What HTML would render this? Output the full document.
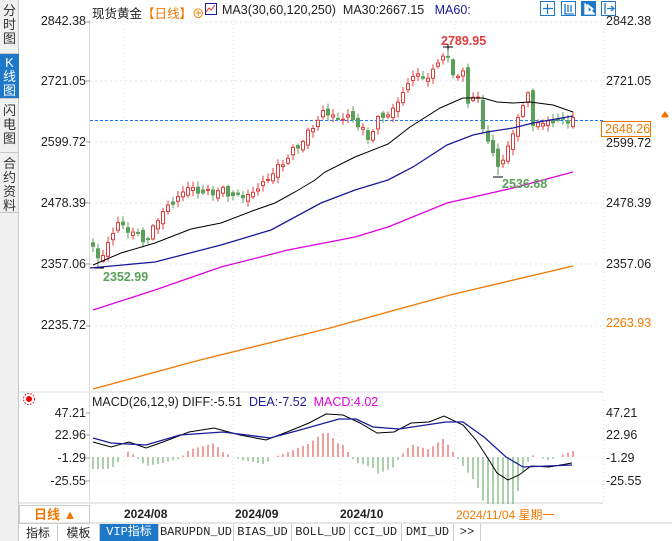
<!DOCTYPE html>
<html><head><meta charset="utf-8">
<style>
*{margin:0;padding:0;box-sizing:border-box}
body{width:672px;height:541px;overflow:hidden;background:#fff;font-family:"Liberation Sans","Noto Sans CJK SC",sans-serif;position:relative}
.side{position:absolute;left:0;top:0;width:19px;height:541px;background:#f0f0f0;border-right:1px solid #c8c8c8}
.tab{position:absolute;left:0;width:19px;font-size:13px;line-height:14px;text-align:center;color:#333;border-bottom:1px solid #c8c8c8}
.lab{position:absolute;font-size:12.5px;color:#222}
.ll{right:586px;text-align:right}
.rl{left:606px}
.btab{position:absolute;top:524px;height:17px;font-size:12px;line-height:17px;text-align:center;color:#222;border-right:1px solid #ccc;font-family:"Liberation Mono","Noto Sans CJK SC",monospace}
</style></head><body>
<div class="side">
<div class="tab" style="top:4px;height:50px">分<br>时<br>图</div>
<div class="tab" style="top:54px;height:45px;background:#1e78c8;color:#fff;padding-top:2px">K<br>线<br>图</div>
<div class="tab" style="top:101px;height:52px;padding-top:3px">闪<br>电<br>图</div>
<div class="tab" style="top:155px;height:58px;padding-top:2px">合<br>约<br>资<br>料</div>
</div>
<svg id="s" width="672" height="541" style="position:absolute;left:0;top:0"></svg>
<div class="lab" style="left:92px;top:3px;font-size:12.5px">现货黄金<span style="color:#f07800">【日线】</span><span style="color:#f07800">⊕</span></div>
<div class="lab" style="left:222px;top:3px">MA3(30,60,120,250)&nbsp; MA30:2667.15 &nbsp; <span style="color:#1a1a9a">MA60:</span></div>
<div class="lab ll" style="top:14px">2842.38</div>
<div class="lab ll" style="top:74px">2721.05</div>
<div class="lab ll" style="top:135px">2599.72</div>
<div class="lab ll" style="top:196px">2478.39</div>
<div class="lab ll" style="top:257px">2357.06</div>
<div class="lab ll" style="top:318px">2235.72</div>
<div class="lab rl" style="top:14px">2842.38</div>
<div class="lab rl" style="top:74px">2721.05</div>
<div class="lab rl" style="top:136px">2599.72</div>
<div class="lab rl" style="top:196px">2478.39</div>
<div class="lab rl" style="top:257px">2357.06</div>
<div class="lab rl" style="top:316px;color:#f07800">2263.93</div>
<div class="lab" style="left:601px;top:121px;width:50px;height:16px;border:1px solid #f07800;color:#f07800;padding-left:3px;line-height:14px;background:#fff">2648.26</div>
<div class="lab" style="left:441px;top:34px;color:#e03c3c;font-weight:bold">2789.95</div>
<div class="lab" style="left:103px;top:270px;color:#5aa05a;font-weight:bold">2352.99</div>
<div class="lab" style="left:502px;top:177px;color:#5aa05a;font-weight:bold">2536.68</div>
<div class="lab" style="left:92px;top:395px">MACD(26,12,9) DIFF:-5.51 &nbsp;<span style="color:#1a1a9a">DEA:-7.52</span> &nbsp;<span style="color:#e000e0">MACD:4.02</span></div>
<div class="lab ll" style="top:406px">47.21</div>
<div class="lab ll" style="top:428px">22.96</div>
<div class="lab ll" style="top:451px">-1.29</div>
<div class="lab ll" style="top:474px">-25.55</div>
<div class="lab rl" style="top:406px">47.21</div>
<div class="lab rl" style="top:428px">22.96</div>
<div class="lab rl" style="top:451px">-1.29</div>
<div class="lab rl" style="top:474px">-25.55</div>
<div style="position:absolute;left:19px;top:505px;width:71px;height:19px;border:1px solid #ccc;color:#f07800;font-weight:bold;font-size:13px;line-height:17px;padding-left:14px;font-family:'Liberation Sans','Noto Sans CJK SC',sans-serif">日线 ▲</div>
<div class="lab" style="left:124px;top:507px;font-weight:bold;font-size:12px">2024/08</div>
<div class="lab" style="left:235px;top:507px;font-weight:bold;font-size:12px">2024/09</div>
<div class="lab" style="left:340px;top:507px;font-weight:bold;font-size:12px">2024/10</div>
<div class="lab" style="left:456px;top:506px;color:#f07800;font-size:12px">2024/11/04 星期一</div>
<div class="btab" style="left:19px;width:39px;font-family:'Noto Sans CJK SC',sans-serif">指标</div>
<div class="btab" style="left:58px;width:42px;font-family:'Noto Sans CJK SC',sans-serif">模板</div>
<div class="btab" style="left:100px;width:59px;background:#1e78c8;color:#fff">VIP指标</div>
<div class="btab" style="left:159px;width:75px">BARUPDN_UD</div>
<div class="btab" style="left:234px;width:58px">BIAS_UD</div>
<div class="btab" style="left:292px;width:58px">BOLL_UD</div>
<div class="btab" style="left:350px;width:52px">CCI_UD</div>
<div class="btab" style="left:402px;width:52px">DMI_UD</div>
<div class="btab" style="left:454px;width:27px">&gt;&gt;</div>
<script>
var s=document.getElementById('s'),h='';
function L(x1,y1,x2,y2,c,w,d){h+='<line x1="'+x1+'" y1="'+y1+'" x2="'+x2+'" y2="'+y2+'" stroke="'+c+'" stroke-width="'+(w||1)+'"'+(d?' stroke-dasharray="'+d+'"':'')+'/>';}
function P(pts,c,w){h+='<polyline fill="none" stroke="'+c+'" stroke-width="'+(w||1)+'" points="'+pts.map(function(p){return p.join(',')}).join(' ')+'"/>';}
function yp(p){return 22+(2842.38-p)*0.5013;}
L(19,392,603,392,'#d8d8d8');L(19,503,603,503,'#d0d0d0');L(19,523,672,523,'#ccc');
L(89.5,20,89.5,503,'#ddd');L(603.5,20,603.5,503,'#ddd',1,'1,3');
[22,81,142,203,264,326].forEach(function(y){L(90,y,603,y,'#e6e6e6',1,'2,3');L(86,y,90,y,'#999');});
[124,233,340,455].forEach(function(x){L(x,20,x,390,'#e6e6e6',1,'1,3');L(x,408,x,503,'#e6e6e6',1,'1,3');});
[413,435,458,481].forEach(function(y){L(90,y,603,y,'#eee',1,'1,3');L(86,y,90,y,'#999');});
[[540,'#fff','#1e78c8'],[562,'#fff','#1e78c8'],[584-4,'#1e78c8','#fff'],[598-2,'#fff','#1e78c8']].forEach(function(a,i){var x=[540,561,581,601][i];
h+='<rect x="'+(x+0.5)+'" y="1.5" width="14" height="14" fill="'+a[1]+'" stroke="#1e78c8"/>';
var c=a[2];h+='<path d="'+['M'+(x+7.5)+' 4v10M'+(x+3)+' 8.5h10','M'+(x+4)+' 4v10h9M'+(x+7)+' 5v7M'+(x+10)+' 5v7','M'+(x+4)+' 3v11h10M'+(x+7)+' 5l5 4-5 4z','M'+(x+4)+' 3v11M'+(x+6)+' 8.5h6M'+(x+10)+' 6l3 2.5-3 2.5'][i]+'" stroke="'+c+'" fill="'+(i==2?c:'none')+'" stroke-width="1.3"/>';});
h+='<rect x="205.5" y="3.5" width="11" height="11" fill="#fff" stroke="#1a1a9a"/><path d="M206 12l3-4 2 2 4-5" stroke="#e03c3c" fill="none"/>';
h+='<path d="M665 112l-3 4h6z M662 117h6" fill="#f07800" stroke="#f07800"/>';
h+='<circle cx="29" cy="399" r="3" fill="#e00"/><circle cx="29" cy="399" r="5.5" fill="none" stroke="#e00" stroke-dasharray="1.5,1.5"/>';
L(90,120.5,603,120.5,'#1e78ff',1,'3,2');
var K=[[93,2392],[99,2365],[101,2372],[118,2442],[133,2421],[148,2407],[158,2453],[178,2493],[188,2513],[203,2501],[221,2507],[238,2493],[253,2501],[273,2541],[288,2573],[303,2607],[313,2633],[323,2663],[338,2651],[353,2651],[368,2611],[378,2647],[393,2667],[403,2701],[413,2737],[423,2731],[433,2741],[443,2781],[448,2767],[453,2737],[463,2741],[468,2681],[473,2693],[478,2691],[483,2633],[488,2601],[493,2581],[498,2561],[503,2561],[508,2593],[513,2627],[518,2647],[523,2673],[528,2707],[533,2633],[538,2641],[573,2648]];
function ip(x){for(var i=0;i<K.length-1;i++){if(x<=K[i+1][0]){var t=(x-K[i][0])/(K[i+1][0]-K[i][0]);return K[i][1]+t*(K[i+1][1]-K[i][1]);}}return K[K.length-1][1];}
var prev=2400;
for(var x=93;x<=573;x+=5){var n=Math.sin(x*1.7)*5+Math.cos(x*0.9)*3;var c=ip(x)+n;var o=prev+Math.sin(x*2.3)*7;prev=c;
var hi=Math.max(o,c)+3+Math.abs(Math.sin(x*3.1))*9,lo=Math.min(o,c)-3-Math.abs(Math.cos(x*2.7))*9;
if(x==448)hi=2789.95;if(x==498)lo=2536.68;if(x==98)lo=2352.99;
var up=c>o,col=up?'#e03c3c':'#5aa05a';var yt=yp(Math.max(o,c)),yb=yp(Math.min(o,c));if(yb-yt<1)yb=yt+1;
L(x,yp(hi),x,yt,col);L(x,yb,x,yp(lo),col);
h+='<rect x="'+(x-1.5)+'" y="'+yt+'" width="3" height="'+(yb-yt)+'" fill="'+(up?'#fff':col)+'" stroke="'+col+'" stroke-width="1"/>';}
L(443,47,453,47,'#000');L(448,44,448,50,'#000');L(493,177,503,177,'#000');L(94,268,104,268,'#000');
P([[93,265],[121,253],[155,243],[191,229],[221,223],[255,210],[275,203],[295,192],[315,180],[325,172],[355,157],[388,144],[410,127],[440,108],[463,98],[483,98],[497,102],[513,103],[530,102],[553,105],[573,112]],'#000');
P([[90,268],[155,262],[221,245],[271,230],[321,203],[355,190],[388,180],[413,167],[447,145],[473,135],[487,132],[513,128],[533,123],[573,116]],'#1a1a9a',1.3);
P([[93,310],[155,290],[221,267],[288,250],[355,237],[388,227],[447,203],[513,188],[573,172]],'#e000e0',1.3);
P([[93,389],[200,360],[330,328],[450,295],[573,266]],'#f07800',1.3);
var D=[[93,442],[111,447],[129,442],[146,448],[163,442],[189,432],[214,428],[240,435],[266,440],[287,432],[309,423],[326,414],[343,415],[360,423],[377,433],[394,432],[411,423],[429,422],[444,416],[463,425],[476,440],[489,460],[497,473],[508,480],[519,475],[531,466],[549,467],[572,463]];
var E=[[93,438],[111,443],[146,445],[180,435],[223,432],[270,438],[300,430],[339,419],[356,419],[373,427],[399,429],[446,422],[463,422],[484,437],[506,457],[523,467],[572,465]];
function iv(A,x){for(var i=0;i<A.length-1;i++){if(x<=A[i+1][0]){var t=(x-A[i][0])/(A[i+1][0]-A[i][0]);return A[i][1]+t*(A[i+1][1]-A[i][1]);}}return A[A.length-1][1];}
for(var x=93;x<=573;x+=5){var d=iv(D,x)-iv(E,x);var ye=457+3*d;if(Math.abs(ye-457)<1)continue;L(x,457,x,Math.max(Math.min(ye,504),430),d<0?'#e03c3c':'#5aa05a');}
P(D,'#000');P(E,'#1a1a9a',1.3);
s.innerHTML=h;
</script>
</body></html>
